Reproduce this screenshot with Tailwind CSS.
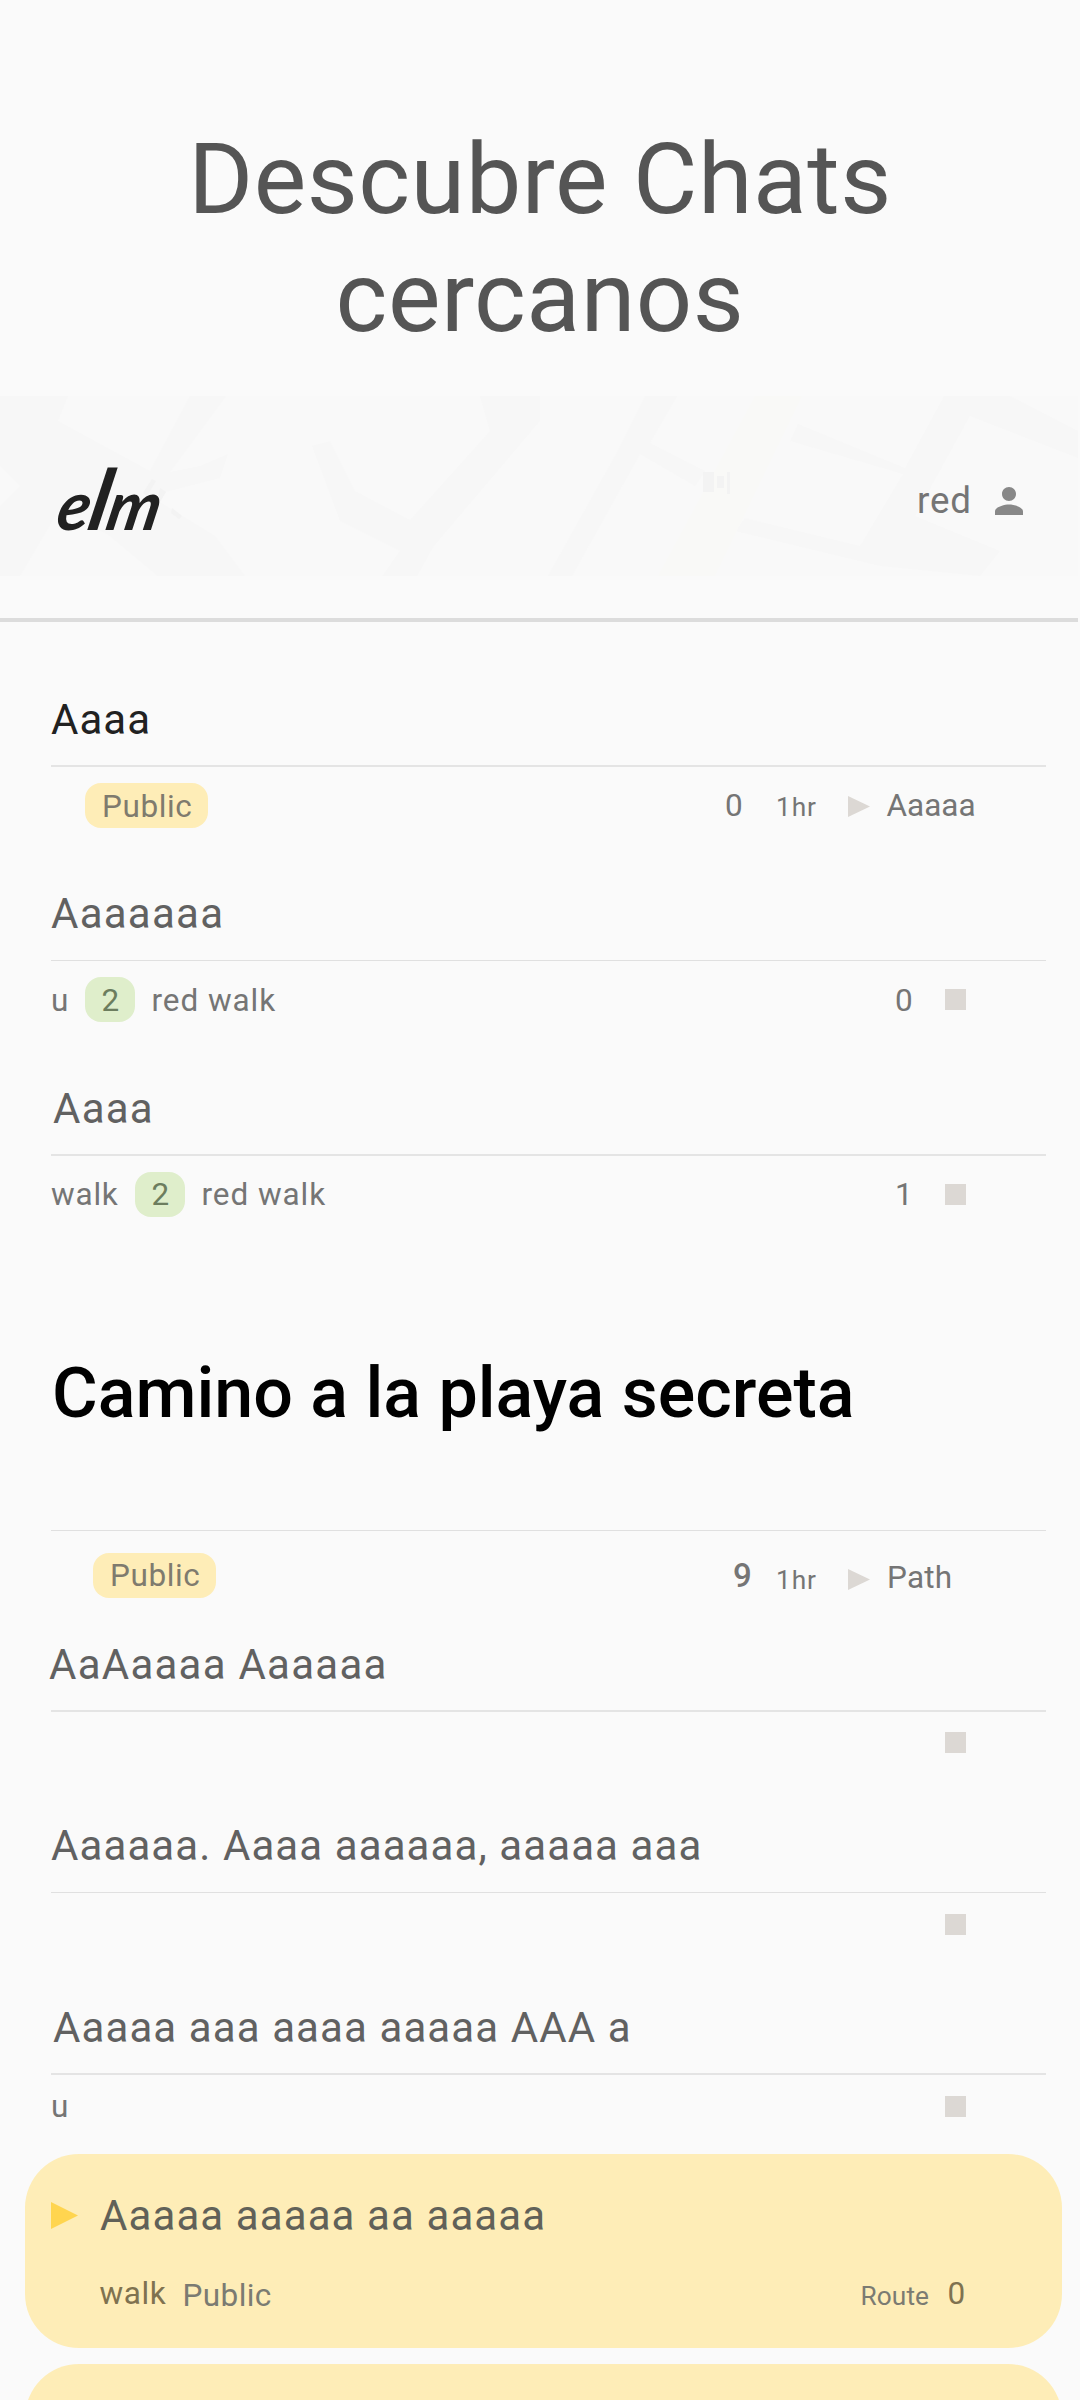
<!DOCTYPE html>
<html lang="es">
<head>
<meta charset="utf-8">
<title>elm</title>
<script src="https://cdn.jsdelivr.net/npm/@tailwindcss/browser@4"></script>
</head>
<body class="bg-[#fafafa]">
<main class="h-[2400px] w-[1080px] overflow-hidden bg-[#fafafa] font-['Roboto',sans-serif] text-[31.5px] leading-[44px] text-[#757575]">

  <h1 class="h-[396px] pt-[120px] text-center text-[99px] leading-[118px] tracking-[0.5px] text-[#555555]">Descubre Chats<br>cercanos</h1>

  <header class="h-[226px] w-[1078px] border-b-[4px] border-[#dcdcdc]">
    <div class="relative h-[180px] bg-[#f9f9f9]">
      <!-- faded street map -->
      <svg class="absolute inset-0" width="1078" height="180" viewBox="0 0 1078 180">
        <g fill="#f7f7f7">
          <path d="M0 0H68L58 25 150 75 190 0H226L170 76 200 70 228 58 220 82 150 100 215 140 245 180H158L110 140 60 112 20 180H0V110L20 90 0 70Z"/>
          <path d="M480 0H540V25L434 150 417 180H382L400 155 340 125 312 50 330 45 355 95 410 124 490 35Z"/>
          <path d="M645 0H677L650 47 705 75 695 90 640 58 572 180H548L615 60Z"/>
          <path d="M944 0H1010L1078 35V62L970 20 915 120 1000 155 980 180 880 170 735 135 745 122 860 150 903 78 790 45 798 28 905 72Z"/>
        </g>
        <path fill="#f9f9f7" d="M755 0H802L715 180H658Z"/>
        <g fill="#f3f3f3"><path d="M703 76h11v20h-11zM717 80h7v12h-7zM727 76h3v22h-3z"/><path d="M152 83l4 2-9 15-4-3zM160 92l6 4-6 10-3-2zM172 112l10 8-3 3-8-6z"/></g>
      </svg>
      <div class="relative flex h-[180px] items-center">
        <div class="ml-[51px] w-[866px] pt-[28px]">
          <span class="inline-block origin-bottom-left scale-x-[0.98] -skew-x-12 font-['Lato',sans-serif] text-[68px] leading-[80px] font-bold tracking-[-1px] text-[#212121] italic">e<span class="text-[84px] leading-none">l</span>m</span>
        </div>
        <span class="w-[71px] pt-[30px] text-[36.75px] tracking-[0.8px]">red</span>
        <svg class="mt-[30px]" width="42" height="42" viewBox="0 0 24 24" fill="#888888"><path d="M12 12c2.21 0 4-1.79 4-4s-1.79-4-4-4-4 1.79-4 4 1.79 4 4 4zm0 2c-2.67 0-8 1.34-8 4v2h16v-2c0-2.66-5.33-4-8-4z"/></svg>
      </div>
    </div>
  </header>

  <article>
    <h2 class="ml-[51px] flex h-[145px] w-[995px] items-end border-b-2 border-[#e4e4e4] pb-[21px] text-[42px] leading-[48px] tracking-[1.05px] text-[#212121]">Aaaa</h2>
    <div class="ml-[51px] flex h-[76px] items-center">
      <div class="ml-[34px] h-[45px] w-[123px] rounded-2xl bg-[#feedb7] pl-[17px] leading-[48px] tracking-[0.6px] text-[#7f7b6e]">Public</div>
      <span class="ml-[517px] w-[51px] pt-[2px]">0</span>
      <span class="w-[71.5px] pt-[4px] text-[26.25px] tracking-[0.9px]">1hr</span>
      <svg class="mt-[2px]" width="22" height="21" viewBox="0 0 22 21" fill="#dcd8d4"><path d="M0 0L22 10.5 0 21Z"/></svg>
      <span class="ml-[17px] pt-px">Aaaaa</span>
    </div>
  </article>

  <article>
    <h2 class="ml-[51px] flex h-[118px] w-[995px] items-end border-b border-[#e0e0e0] pb-[22px] text-[42px] leading-[48px] tracking-[1.25px] text-[#616161]">Aaaaaaa</h2>
    <div class="ml-[51px] flex h-[77px] items-center">
      <span class="w-[34px] pt-[2px]">u</span>
      <div class="h-[45px] w-[50px] rounded-2xl bg-[#dfeecb] pl-[16.5px] leading-[48px] text-[#6c7d5e]">2</div>
      <span class="ml-[16.5px] w-[743.5px] pt-[2px] tracking-[0.93px]">red walk</span>
      <span class="w-[50px] pt-[2px]">0</span>
      <div class="h-[21px] w-[21px] bg-[#dcd8d4]"></div>
    </div>
  </article>

  <article>
    <h2 class="ml-[51px] flex h-[118px] w-[995px] items-end border-b-2 border-[#e4e4e4] pb-[21px] pl-[2px] text-[42px] leading-[48px] tracking-[1.25px] text-[#616161]">Aaaa</h2>
    <div class="ml-[51px] flex h-[76px] items-center">
      <span class="w-[84px] pt-px tracking-[0.8px]">walk</span>
      <div class="h-[45px] w-[50px] rounded-2xl bg-[#dfeecb] pl-[16.5px] leading-[46px] text-[#6c7d5e]">2</div>
      <span class="ml-[16.5px] w-[693.5px] pt-px tracking-[0.93px]">red walk</span>
      <span class="w-[50px] pt-px">1</span>
      <div class="h-[21px] w-[21px] bg-[#dcd8d4]"></div>
    </div>
  </article>

  <article>
    <h2 class="ml-[51px] flex h-[299px] w-[995px] items-end border-b border-[#e0e0e0] pb-[97px] pl-[1px] text-[70px] leading-[80px] font-medium text-black">Camino a la playa secreta</h2>
    <div class="ml-[51px] flex h-[88px] items-center">
      <div class="ml-[42px] h-[45px] w-[123px] rounded-2xl bg-[#feedb7] pl-[17px] leading-[46px] tracking-[0.6px] text-[#7f7b6e]">Public</div>
      <span class="ml-[517px] w-[43px] pt-px text-[33px] font-medium">9</span>
      <span class="w-[72px] pt-[9px] text-[26.25px] tracking-[0.9px]">1hr</span>
      <svg class="mt-[9px]" width="22" height="21" viewBox="0 0 22 21" fill="#dcd8d4"><path d="M0 0L22 10.5 0 21Z"/></svg>
      <span class="ml-[17px] pt-[5px] tracking-[0.2px]">Path</span>
    </div>
  </article>

  <article>
    <h2 class="ml-[49px] flex h-[91px] w-[997px] items-end pb-[21px] text-[42px] leading-[48px] tracking-[1.25px] text-[#616161]">AaAaaaa Aaaaaa</h2>
    <div class="ml-[51px] flex h-[63px] w-[995px] items-center border-t-2 border-[#e4e4e4]">
      <div class="ml-[894px] h-[21px] w-[21px] bg-[#dcd8d4]"></div>
    </div>
  </article>

  <article>
    <h2 class="ml-[51px] flex h-[119px] w-[995px] items-end pb-[22px] text-[42px] leading-[48px] tracking-[1.1px] text-[#616161]">Aaaaaa. Aaaa aaaaaa, aaaaa aaa</h2>
    <div class="ml-[51px] flex h-[64px] w-[995px] items-center border-t border-[#e0e0e0]">
      <div class="ml-[894px] h-[21px] w-[21px] bg-[#dcd8d4]"></div>
    </div>
  </article>

  <article>
    <h2 class="ml-[51px] flex h-[117px] w-[995px] items-end pb-[21px] pl-[2px] text-[42px] leading-[48px] tracking-[1.1px] text-[#616161]">Aaaaa aaa aaaa aaaaa AAA a</h2>
    <div class="ml-[51px] flex h-[65px] w-[995px] items-center border-t-2 border-[#e4e4e4]">
      <span class="w-[894px] pt-px">u</span>
      <div class="h-[21px] w-[21px] bg-[#dcd8d4]"></div>
    </div>
  </article>

  <article class="mt-[15.5px] ml-[24.5px] h-[194px] w-[1037.5px] rounded-[54px] bg-[#feedb7]">
    <div class="flex h-[110px] items-center pt-[14px] pl-[26.5px]">
      <svg width="27" height="27" viewBox="0 0 27 27" fill="#ffd54f"><path d="M0 0L27 13.5 0 27Z"/></svg>
      <h2 class="ml-[22px] text-[42px] leading-[48px] tracking-[1.1px] text-[#616158]">Aaaaa aaaaa aa aaaaa</h2>
    </div>
    <div class="flex h-[60px] items-center pl-[75px]">
      <span class="w-[83px] tracking-[0.6px] text-[#7f7250]">walk</span>
      <span class="w-[678px] pt-[4px] tracking-[0.4px] text-[#7b7b72]">Public</span>
      <span class="w-[87px] pt-[4px] text-[26.25px] tracking-[0.1px] text-[#7b7b72]">Route</span>
      <span class="text-[#7f7250]">0</span>
    </div>
  </article>

  <article class="mt-[16px] ml-[24.5px] h-[194px] w-[1037.5px] rounded-[54px] bg-[#feedb7]"></article>
</main>
</body>
</html>
